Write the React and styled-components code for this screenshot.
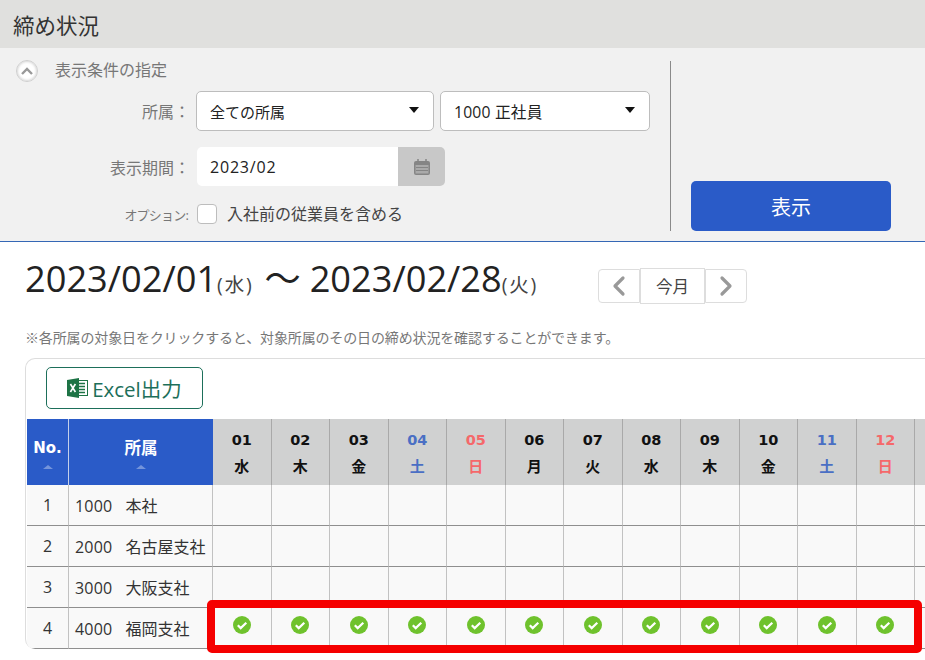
import React from 'react';
import styled, { createGlobalStyle } from 'styled-components';
import { ChevronLeft, ChevronRight } from 'lucide-react';

const days = [
  ['01', '水'], ['02', '木'], ['03', '金'], ['04', '土'], ['05', '日'], ['06', '月'], ['07', '火'],
  ['08', '水'], ['09', '木'], ['10', '金'], ['11', '土'], ['12', '日'],
];

const offices = [
  { no: 1, code: '1000', name: '本社', done: false },
  { no: 2, code: '2000', name: '名古屋支社', done: false },
  { no: 3, code: '3000', name: '大阪支社', done: false },
  { no: 4, code: '4000', name: '福岡支社', done: true },
];

const Global = createGlobalStyle`
  html, body { margin: 0; padding: 0; background: #fff; overflow: hidden; }
  body {
    font-family: "Open Sans", "Noto Sans CJK JP", sans-serif;
    color: #222;
  }
  * { box-sizing: border-box; }
`;

const Page = styled.div`
  width: 925px;
  height: 660px;
  overflow: hidden;
  position: relative;
`;

const TitleBar = styled.h1`
  margin: 0;
  height: 48px;
  padding: 0 13px;
  background: #e0e0de;
  font-size: 21.5px;
  font-weight: 400;
  line-height: 51px;
  color: #333;
`;

const Panel = styled.section`
  height: 194px;
  padding: 12px 34px 10px 16px;
  display: flex;
  background: #f1f1f1;
  border-bottom: 1px solid #3567b5;
`;

const Conditions = styled.div`
  width: 655px;
  margin-top: 1px;
  border-right: 1px solid #8a8a8a;
  display: flex;
  flex-direction: column;
`;

const Toggle = styled.div`
  display: flex;
  align-items: center;
  gap: 17px;
  height: 22px;
  margin-top: -1px;
  font-size: 16px;
  color: #777;
  span + span { margin-bottom: 5px; }
`;

const ToggleCircle = styled.span`
  width: 22px;
  height: 22px;
  border-radius: 50%;
  background: #fff;
  border: 1px solid #cfcfcf;
  box-shadow: inset 0 0 3px #bbb;
  display: flex;
  align-items: center;
  justify-content: center;
`;

const Row = styled.div`
  display: flex;
  align-items: center;
  margin-top: ${p => p.$top}px;
  height: ${p => p.$height}px;
`;

const Label = styled.label`
  width: 180px;
  padding-right: ${p => p.$small ? '8px' : '6px'};
  text-align: right;
  font-size: ${p => p.$small ? '13px' : '16px'};
  letter-spacing: ${p => p.$small ? '-0.8px' : '0'};
  color: #777;
  white-space: nowrap;
`;

const Select = styled.div`
  width: ${p => p.$width}px;
  height: 40px;
  margin-right: 6px;
  padding: 0 13px;
  display: flex;
  align-items: center;
  justify-content: space-between;
  background: #fff;
  border: 1px solid #bdbdbd;
  border-radius: 5px;
  font-size: ${p => p.$wide ? '15.7px' : '15px'};
  letter-spacing: ${p => p.$wide ? '0.2px' : '0'};
  color: #222;
`;

const Caret = styled.span`
  width: 0;
  height: 0;
  margin-right: 1px;
  margin-bottom: 3px;
  border-left: 5px solid transparent;
  border-right: 5px solid transparent;
  border-top: 6px solid #111;
`;

const DateField = styled.div`
  width: 248px;
  height: 39px;
  margin-left: 1px;
  display: flex;
  border-radius: 5px;
  overflow: hidden;
`;

const DateValue = styled.div`
  flex: 1;
  padding-left: 13px;
  display: flex;
  align-items: center;
  background: #fff;
  font-size: 16px;
  letter-spacing: 0.8px;
`;

const CalendarButton = styled.div`
  width: 47px;
  display: flex;
  align-items: center;
  justify-content: center;
  background: #c8c8c8;
`;

const CheckBox = styled.span`
  width: 20px;
  height: 20px;
  margin-left: 1px;
  background: #fff;
  border: 1px solid #bdbdbd;
  border-radius: 4px;
`;

const CheckLabel = styled.span`
  margin-left: 10px;
  font-size: 16px;
  color: #444;
  margin-bottom: 2px;
`;

const Actions = styled.div`
  flex: 1;
  display: flex;
  align-items: flex-end;
  padding-left: 20px;
`;

const ShowButton = styled.button`
  width: 200px;
  height: 50px;
  border: 0;
  border-radius: 5px;
  background: #2a5bc8;
  color: #fff;
  font: inherit;
  font-size: 20px;
`;

const Content = styled.main`
  padding: 0 0 0 25px;
`;

const RangeRow = styled.div`
  display: flex;
  align-items: center;
  height: 78px;
`;

const RangeTitle = styled.h2`
  width: 573px;
  margin: 0 0 10px;
  font-size: 36.2px;
  font-weight: 400;
  color: #222;
  white-space: nowrap;
  small { font-size: 19.5px; letter-spacing: 1.8px; color: #444; }
`;

const Tilde = styled.span`
  margin: 0 9px 0 11px;
`;

const Pager = styled.div`
  display: flex;
  align-items: center;
  margin-top: 9px;
`;

const PageButton = styled.div`
  width: 42px;
  height: 34px;
  display: flex;
  align-items: center;
  justify-content: center;
  background: #fff;
  border: 1px solid #ddd;
  border-radius: ${p => p.$side === 'left' ? '4px 0 0 4px' : '0 4px 4px 0'};
  color: #999;
`;

const TodayButton = styled.div`
  width: 65px;
  height: 36px;
  display: flex;
  align-items: center;
  justify-content: center;
  background: #fff;
  border: 1px solid #ddd;
  font-size: 16.5px;
  color: #444;
`;

const Note = styled.p`
  margin: 0;
  height: 38px;
  line-height: 35px;
  font-size: 14px;
  letter-spacing: -0.14px;
  color: #777;
  white-space: nowrap;
`;

const Card = styled.div`
  width: 1000px;
  height: 291px;
  padding: 8px 0 0 1px;
  border: 1px solid #ddd;
  border-bottom: 0;
  border-radius: 10px 0 0 10px;
  background: #fff;
  overflow: hidden;
`;

const ExcelButton = styled.button`
  width: 157px;
  height: 42px;
  margin-left: 19px;
  display: flex;
  align-items: center;
  justify-content: center;
  gap: 4px;
  background: #fff;
  border: 1px solid #1d6f5a;
  border-radius: 5px;
  color: #1d6f5a;
  font: inherit;
  font-size: 20.5px;
`;

const Table = styled.table`
  margin-top: 10px;
  width: 946.5px;
  table-layout: fixed;
  border-collapse: separate;
  border-spacing: 0;
`;

const BlueHead = styled.th`
  height: 66px;
  padding-top: 2px;
  background: #2a5bc8;
  color: #fff;
  font-size: ${p => p.$latin ? '15px' : '16.5px'};
  line-height: 22px;
  font-family: ${p => p.$latin ? '"DejaVu Sans", sans-serif' : 'inherit'};
  font-weight: 700;
  border-right: 1px solid #c4d0ea;
  vertical-align: middle;
  &:nth-child(2) { border-right: 0; }
`;

const SortMark = styled.span`
  display: block;
  width: 0;
  height: 0;
  margin: 6px auto 0;
  border-left: 5px solid transparent;
  border-right: 5px solid transparent;
  border-bottom: 4px solid rgba(255, 255, 255, 0.35);
`;

const DayHead = styled.th`
  padding-top: 2px;
  background: #d0d1d1;
  border-right: 1px solid #a9a9a9;
  font-size: 15px;
  line-height: 26px;
  font-weight: 700;
  color: ${p => p.$tone === 'sat' ? '#4a6fc4' : p.$tone === 'sun' ? '#f5686a' : '#111'};
  div { font-family: "DejaVu Sans", sans-serif; font-size: 14.5px; }
`;

const Cell = styled.td`
  height: 41px;
  padding: 0;
  background: #f9f9f9;
  border-right: 1px solid #c2c2c2;
  border-bottom: 1px solid #8f8f8f;
  font-size: 16px;
  color: #333;
  text-align: ${p => p.$align || 'center'};
  vertical-align: middle;
  white-space: nowrap;
`;

const OfficeName = styled.span`
  padding-left: 6px;
  letter-spacing: 0.2px;
  span { margin-left: 13px; letter-spacing: 0; }
`;

const Highlight = styled.div`
  position: absolute;
  left: 207px;
  top: 600px;
  width: 715px;
  height: 53px;
  border: 8px solid #f50000;
  border-radius: 5px;
  pointer-events: none;
`;

const CheckIcon = () => (
  <svg width="18" height="18" viewBox="0 0 18 18" style={{ display: 'block', margin: '-6px auto 0' }}>
    <circle cx="9" cy="9" r="9" fill="#6fc22d" />
    <path d="M4.8 9.2l2.9 2.9 5.6-5.4" fill="none" stroke="#fff" strokeWidth="2.2" />
  </svg>
);

const ExcelIcon = () => (
  <svg width="21" height="20" viewBox="0 0 21 20">
    <rect x="8" y="2.5" width="12.5" height="15" fill="#fff" stroke="#1d7345" />
    <path d="M12 5.5h6M12 8.5h6M12 11.5h6M12 14.5h6" stroke="#1d7345" strokeWidth="1.6" />
    <path d="M0 2l12-2v20L0 18z" fill="#1d7345" />
    <path d="M3.4 6l5 8M8.4 6l-5 8" stroke="#fff" strokeWidth="1.6" />
  </svg>
);

const CalendarIcon = () => (
  <svg width="18" height="18" viewBox="0 0 18 18">
    <rect x="1" y="3" width="16" height="14" rx="2" fill="#858585" />
    <rect x="2.5" y="7" width="13" height="8.5" fill="#aaa" />
    <path d="M3 9.5h12M3 12.5h12" stroke="#858585" />
    <path d="M5 1v3M13 1v3" stroke="#858585" strokeWidth="1.5" />
  </svg>
);

const toneOf = day => (day === '土' ? 'sat' : day === '日' ? 'sun' : 'normal');

export default function App() {
  return (
    <Page>
      <Global />
      <TitleBar>締め状況</TitleBar>
      <Panel>
        <Conditions>
          <Toggle>
            <ToggleCircle>
              <svg width="14" height="10" viewBox="0 0 14 10">
                <path d="M2 8l5-5 5 5" fill="none" stroke="#999" strokeWidth="2.4" />
              </svg>
            </ToggleCircle>
            <span>表示条件の指定</span>
          </Toggle>
          <Row $top={9} $height={40}>
            <Label>所属：</Label>
            <Select $width={238}>全ての所属<Caret /></Select>
            <Select $width={210} $wide>1000 正社員<Caret /></Select>
          </Row>
          <Row $top={16} $height={39}>
            <Label>表示期間：</Label>
            <DateField>
              <DateValue>2023/02</DateValue>
              <CalendarButton><CalendarIcon /></CalendarButton>
            </DateField>
          </Row>
          <Row $top={17} $height={22}>
            <Label $small>オプション:</Label>
            <CheckBox />
            <CheckLabel>入社前の従業員を含める</CheckLabel>
          </Row>
        </Conditions>
        <Actions>
          <ShowButton>表示</ShowButton>
        </Actions>
      </Panel>
      <Content>
        <RangeRow>
          <RangeTitle>
            2023/02/01<small>(水)</small><Tilde>～</Tilde>2023/02/28<small>(火)</small>
          </RangeTitle>
          <Pager>
            <PageButton $side="left"><ChevronLeft size={32} strokeWidth={2.4} /></PageButton>
            <TodayButton>今月</TodayButton>
            <PageButton $side="right"><ChevronRight size={32} strokeWidth={2.4} /></PageButton>
          </Pager>
        </RangeRow>
        <Note>※各所属の対象日をクリックすると、対象所属のその日の締め状況を確認することができます。</Note>
        <Card>
          <ExcelButton><ExcelIcon />Excel出力</ExcelButton>
          <Table>
            <colgroup>
              <col style={{ width: 42 }} />
              <col style={{ width: 144 }} />
              {days.map(([d]) => <col key={d} style={{ width: 58.5 }} />)}
              <col style={{ width: 58.5 }} />
            </colgroup>
            <thead>
              <tr>
                <BlueHead $latin>No.<SortMark /></BlueHead>
                <BlueHead>所属<SortMark /></BlueHead>
                {days.map(([d, w]) => (
                  <DayHead key={d} $tone={toneOf(w)}>
                    <div>{d}</div>
                    {w}
                  </DayHead>
                ))}
                <DayHead />
              </tr>
            </thead>
            <tbody>
              {offices.map(o => (
                <tr key={o.no}>
                  <Cell>{o.no}</Cell>
                  <Cell $align="left">
                    <OfficeName>{o.code}<span>{o.name}</span></OfficeName>
                  </Cell>
                  {days.map(([d]) => (
                    <Cell key={d}>{o.done && <CheckIcon />}</Cell>
                  ))}
                  <Cell />
                </tr>
              ))}
            </tbody>
          </Table>
        </Card>
      </Content>
      <Highlight />
    </Page>
  );
}
